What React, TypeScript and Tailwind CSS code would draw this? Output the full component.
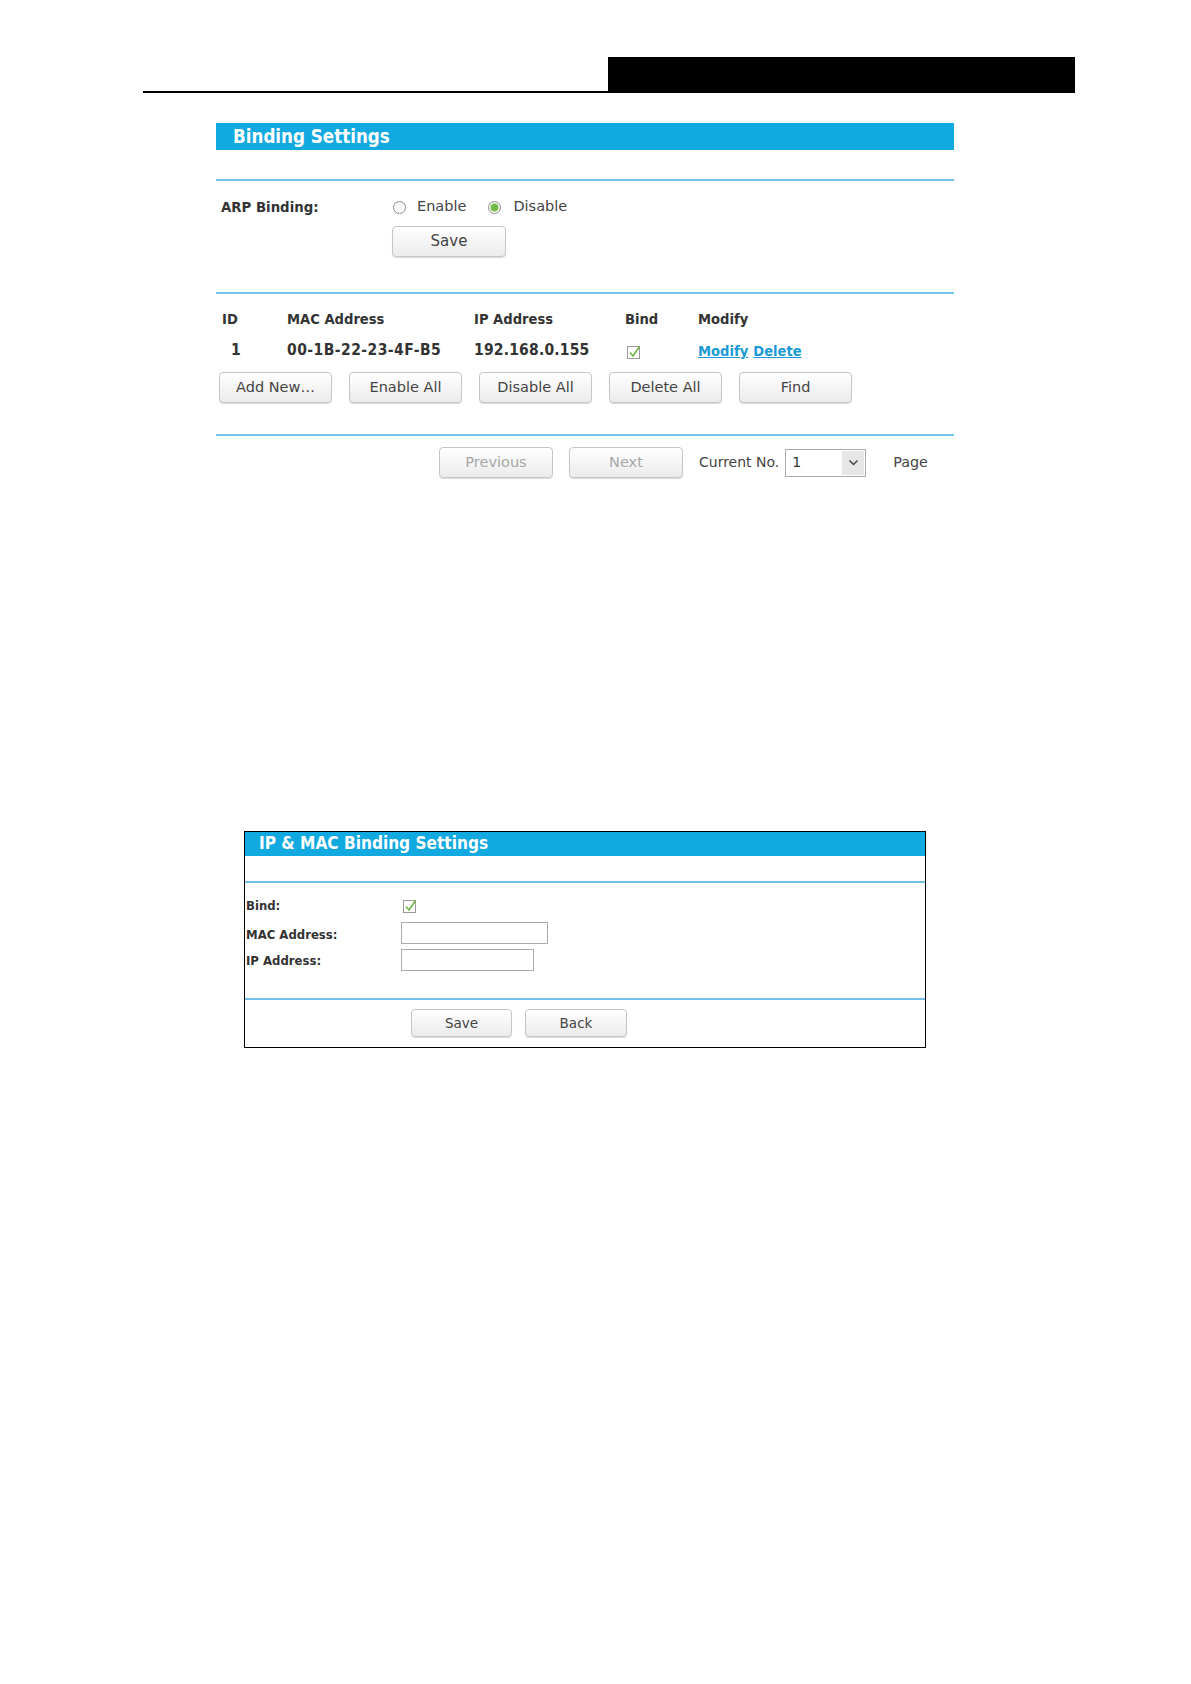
import type { ReactNode } from "react";

const BOLD = "font-['DejaVu_Sans_Condensed','Liberation_Sans',sans-serif] font-bold";
const REG = "font-['DejaVu_Sans',sans-serif]";

function Btn({
  children,
  w,
  h = "h-[31px]",
  disabled,
  size = "text-[14.5px]",
}: {
  children: ReactNode;
  w: string;
  h?: string;
  disabled?: boolean;
  size?: string;
}) {
  return (
    <div
      className={`${w} ${h} ${REG} ${size} flex items-center justify-center rounded-[4px] border border-[#c6c6c6] bg-linear-to-b from-white to-[#ebebeb] shadow-[0_1px_1px_rgba(0,0,0,0.15)] ${
        disabled ? "text-[#a8a8a8]" : "text-[#444]"
      }`}
    >
      {children}
    </div>
  );
}

function Radio({ checked }: { checked?: boolean }) {
  return (
    <span className="flex h-[13px] w-[13px] items-center justify-center rounded-full border border-[#8d8d8d] bg-linear-to-b from-[#f4f4f4] to-white">
      {checked && <span className="h-[7px] w-[7px] rounded-full bg-[#72b844] ring-1 ring-[#b9dca0]" />}
    </span>
  );
}

function Check() {
  return (
    <svg width="15" height="15" viewBox="0 0 15 15">
      <rect x="0.5" y="2.5" width="12" height="12" fill="#fff" stroke="#9a9a9a" />
      <path d="M3 8.5 L6 12 L12.5 2.5" fill="none" stroke="#6db33f" strokeWidth="1.6" />
    </svg>
  );
}

function Line() {
  return <div className="h-[2px] bg-[#74c2e9]" />;
}

export default function App() {
  return (
    <div className="min-h-[1684px] w-[1191px] bg-white text-[#333]">
      {/* page header */}
      <div className="flex pl-[143px] pt-[57px]">
        <div className="h-[36px] w-[465px] border-b-2 border-black" />
        <div className="h-[36px] w-[467px] bg-black" />
      </div>

      {/* Binding Settings */}
      <div className="ml-[216px] mt-[30px] w-[738px]">
        <div className={`flex h-[27px] items-center bg-[#12a9e0] pl-[17px] text-[18.6px] text-white ${BOLD}`}>
          Binding Settings
        </div>
        <div className="mt-[29px]">
          <Line />
        </div>

        <div className="mt-[14px] flex h-[24px] items-center">
          <div className={`w-[177px] pl-[5px] text-[14.8px] text-[#333] ${BOLD}`}>ARP Binding:</div>
          <Radio />
          <span className={`ml-[11px] text-[14.5px] text-[#444] ${REG}`}>Enable</span>
          <span className="ml-[22px]">
            <Radio checked />
          </span>
          <span className={`ml-[12px] text-[14.5px] text-[#444] ${REG}`}>Disable</span>
        </div>
        <div className="ml-[176px] mt-[7px]">
          <Btn w="w-[114px]" size="text-[15px]">
            Save
          </Btn>
        </div>

        <div className="mt-[35px]">
          <Line />
        </div>

        <div className={`mt-[12px] flex h-[26px] items-center text-[14.6px] text-[#333] ${BOLD}`}>
          <div className="w-[71px] pl-[6px]">ID</div>
          <div className="w-[187px]">MAC Address</div>
          <div className="w-[151px]">IP Address</div>
          <div className="w-[73px]">Bind</div>
          <div>Modify</div>
        </div>
        <div className={`mt-[6px] flex h-[26px] items-center text-[15.5px] text-[#333] ${BOLD}`}>
          <div className="w-[71px] pl-[15px]">1</div>
          <div className="w-[187px] tracking-[0.45px]">00-1B-22-23-4F-B5</div>
          <div className="w-[151px] tracking-[0.2px]">192.168.0.155</div>
          <div className="flex w-[73px] pl-[2px]">
            <Check />
          </div>
          <div className="flex gap-[5px] text-[14.6px] text-[#1b9ad6]">
            <span className="underline">Modify</span>
            <span className="underline">Delete</span>
          </div>
        </div>

        <div className="ml-[3px] mt-[8px] flex gap-[17px]">
          <Btn w="w-[113px]">Add New…</Btn>
          <Btn w="w-[113px]">Enable All</Btn>
          <Btn w="w-[113px]">Disable All</Btn>
          <Btn w="w-[113px]">Delete All</Btn>
          <Btn w="w-[113px]">Find</Btn>
        </div>

        <div className="mt-[31px]">
          <Line />
        </div>

        <div className="ml-[223px] mt-[11px] flex items-center">
          <Btn w="w-[114px]" disabled>
            Previous
          </Btn>
          <div className="ml-[16px]">
            <Btn w="w-[114px]" disabled>
              Next
            </Btn>
          </div>
          <span className={`ml-[16px] text-[14px] text-[#444] ${REG}`}>Current No.</span>
          <div className="ml-[6px] flex h-[28px] w-[81px] items-center border border-[#a9a9a9] bg-white">
            <span className={`flex-1 pl-[6px] text-[14px] text-[#333] ${REG}`}>1</span>
            <span className="mr-px flex h-[24px] w-[22px] items-center justify-center bg-[#e6e6e6]">
              <svg width="11" height="7" viewBox="0 0 11 7">
                <path d="M1.5 1.5 L5.5 5.5 L9.5 1.5" fill="none" stroke="#444" strokeWidth="1.5" />
              </svg>
            </span>
          </div>
          <span className={`ml-[27px] text-[14.3px] text-[#444] ${REG}`}>Page</span>
        </div>
      </div>

      {/* IP & MAC Binding Settings */}
      <div className="ml-[244px] mt-[353px] w-[682px] border-[1.5px] border-black pb-[10px]">
        <div className={`flex h-[24px] items-center bg-[#12a9e0] pl-[14px] text-[17.1px] text-white ${BOLD}`}>
          IP &amp; MAC Binding Settings
        </div>
        <div className="mt-[25px]">
          <Line />
        </div>

        <div className={`text-[13px] text-[#333] ${BOLD}`}>
          <div className="mt-[12px] flex h-[20px] items-center">
            <div className="w-[158px] pl-px pt-[2px]">Bind:</div>
            <Check />
          </div>
          <div className="mt-[7px] flex h-[22px] items-center">
            <div className="w-[156px] pl-px pt-[3px]">MAC Address:</div>
            <div className="h-[22px] w-[147px] border border-[#ababab] bg-white" />
          </div>
          <div className="mt-[5px] flex h-[22px] items-center">
            <div className="w-[156px] pl-px pt-[2px]">IP Address:</div>
            <div className="h-[22px] w-[133px] border border-[#ababab] bg-white" />
          </div>
        </div>

        <div className="mt-[27px]">
          <Line />
        </div>

        <div className="ml-[166px] mt-[9px] flex gap-[13px]">
          <Btn w="w-[101px]" h="h-[28px]" size="text-[13.5px]">
            Save
          </Btn>
          <Btn w="w-[102px]" h="h-[28px]" size="text-[13.5px]">
            Back
          </Btn>
        </div>
      </div>
    </div>
  );
}
